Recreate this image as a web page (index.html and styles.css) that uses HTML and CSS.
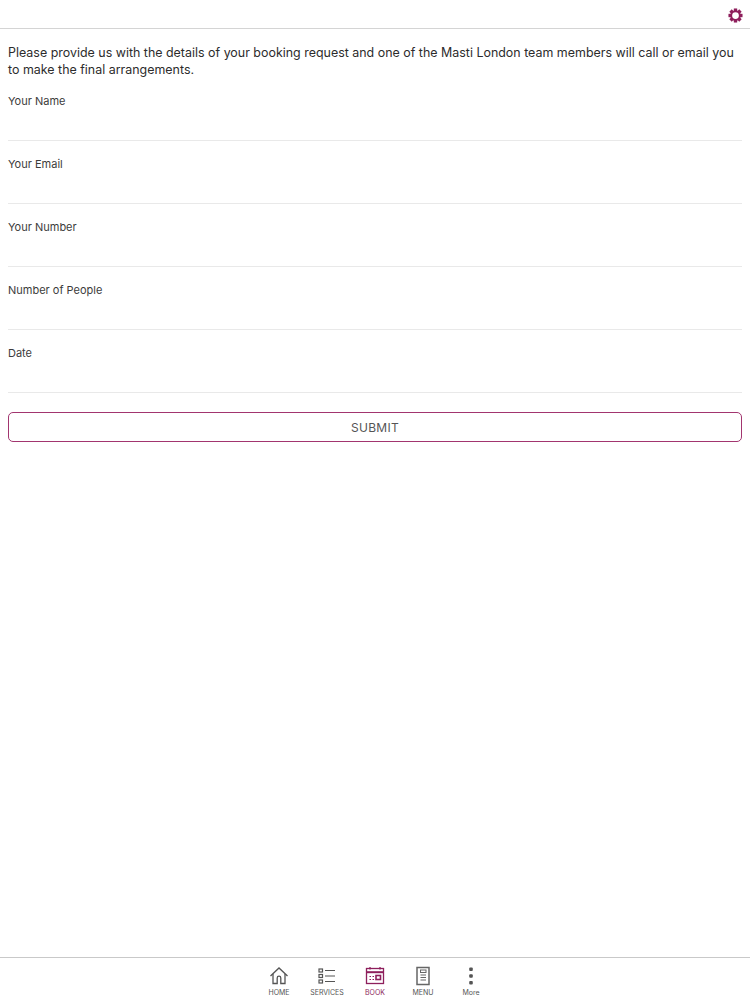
FILE: index.html
```html
<!DOCTYPE html>
<html lang="en">
<head>
    <meta charset="UTF-8">
    <meta name="viewport" content="width=device-width, initial-scale=1.0">
    <title>Book</title>
    <link rel="stylesheet" href="styles.css">
</head>
<body>
    <div class="page">
        <div class="topbar">
            <svg class="gear" width="15" height="15" viewBox="0 0 16 16">
                <circle cx="8" cy="8" r="4.6" fill="none" stroke="#8e1f5c" stroke-width="2"/>
                <g fill="#8e1f5c">
                    <rect x="6.2" y="0.5" width="3.6" height="3"/>
                    <rect x="6.2" y="12.5" width="3.6" height="3"/>
                    <rect x="0.5" y="6.2" width="3" height="3.6"/>
                    <rect x="12.5" y="6.2" width="3" height="3.6"/>
                    <rect x="6.2" y="0.5" width="3.6" height="3" transform="rotate(45 8 8)"/>
                    <rect x="6.2" y="12.5" width="3.6" height="3" transform="rotate(45 8 8)"/>
                    <rect x="0.5" y="6.2" width="3" height="3.6" transform="rotate(45 8 8)"/>
                    <rect x="12.5" y="6.2" width="3" height="3.6" transform="rotate(45 8 8)"/>
                </g>
            </svg>
        </div>

        <div class="content">
            <p class="intro">Please provide us with the details of your booking request and one of the Masti London team members will call or email you to make the final arrangements.</p>
            <form class="booking-form">
                <div class="field"><label>Your Name</label></div>
                <div class="field"><label>Your Email</label></div>
                <div class="field"><label>Your Number</label></div>
                <div class="field"><label>Number of People</label></div>
                <div class="field"><label>Date</label></div>
                <button type="button" class="submit">SUBMIT</button>
            </form>
        </div>

        <div class="tabbar">
            <a class="tab" href="#">
                <svg width="20" height="20" viewBox="0 0 20 20" fill="none" stroke="#555" stroke-width="1.3">
                    <path d="M1.5 10 10 2l8.5 8"/>
                    <path d="M4 8v9.5h4.2v-5.500a1.800 1.800 0 0 1 3.600 0v5.500H16V8"/>
                </svg>
                <span>HOME</span>
            </a>
            <a class="tab" href="#">
                <svg width="20" height="20" viewBox="0 0 20 20" fill="none" stroke="#555" stroke-width="1.2">
                    <rect x="2" y="3" width="3.5" height="3"/>
                    <rect x="2" y="8.5" width="3.5" height="3"/>
                    <rect x="2" y="14" width="3.5" height="3"/>
                    <path d="M8 4.500h10M8 10h10M8 15.500h10"/>
                </svg>
                <span>SERVICES</span>
            </a>
            <a class="tab active" href="#">
                <svg width="20" height="20" viewBox="0 0 20 20" fill="none" stroke="#8e1f5c" stroke-width="1.3">
                    <rect x="1.5" y="2.5" width="17" height="15"/>
                    <path d="M1.5 6.2h17" stroke-width="2"/>
                    <path d="M5 1v2.500M15 1v2.500"/>
                    <path d="M4.500 10.500h1.500M7.500 10.500h1.500M4.500 13.500h1.500M7.500 13.500h1.500" stroke-width="1.2"/>
                    <rect x="11" y="9.5" width="4.5" height="4" stroke-width="1.6"/>
                </svg>
                <span>BOOK</span>
            </a>
            <a class="tab" href="#">
                <svg width="20" height="20" viewBox="0 0 20 20" fill="none" stroke="#666" stroke-width="1.5">
                    <rect x="4" y="1.5" width="12" height="17"/>
                    <rect x="7.500" y="4" width="5.500" height="2.500" stroke-width="1"/>
                    <path d="M7.500 9h5.500M7.500 11.500h5.500M7.500 14h5.500" stroke-width="1.2"/>
                </svg>
                <span>MENU</span>
            </a>
            <a class="tab" href="#">
                <svg width="20" height="20" viewBox="0 0 20 20" fill="#555">
                    <rect x="8.2" y="1.5" width="3.6" height="3.6" rx="1"/>
                    <rect x="8.2" y="8.2" width="3.6" height="3.6" rx="1"/>
                    <rect x="8.2" y="14.9" width="3.6" height="3.6" rx="1"/>
                </svg>
                <span>More</span>
            </a>
        </div>
    </div>
</body>
</html>
```

FILE: styles.css
```css
body {
    font-family: Inter, "Open Sans", sans-serif;
    margin: 0;
    padding: 0;
    background-color: #fff;
    color: #333;
}

.page {
    height: 1000px;
    display: flex;
    flex-direction: column;
    overflow: hidden;
}

.topbar {
    height: 28px;
    border-bottom: 1px solid #d4d4d4;
    display: flex;
    justify-content: flex-end;
    align-items: center;
    padding-right: 7px;
    flex-shrink: 0;
}

.gear {
    margin-top: 3px;
}

.content {
    flex: 1;
    padding: 15px 8px 0;
}

.intro {
    margin: 0;
    font-size: 12.45px;
    line-height: 17px;
    color: #2c2c2c;
}

.field {
    box-sizing: border-box;
    height: 63px;
    border-bottom: 1px solid #e9e9e9;
}

.field label {
    display: block;
    padding-top: 16px;
    font-size: 11px;
    line-height: 14px;
    color: #3c3c3c;
}

.submit {
    display: block;
    width: 100%;
    height: 30px;
    margin-top: 19px;
    background-color: #fff;
    border: 1px solid #a2356f;
    border-radius: 5px;
    font-family: inherit;
    font-size: 12px;
    letter-spacing: 0.3px;
    color: #555;
}

.tabbar {
    height: 42px;
    border-top: 1px solid #c9c9c9;
    display: flex;
    justify-content: center;
    flex-shrink: 0;
}

.tab {
    width: 48px;
    padding-top: 8px;
    display: flex;
    flex-direction: column;
    align-items: center;
    text-decoration: none;
    color: #555;
    font-size: 7px;
    line-height: 9px;
}

.tab span {
    margin-top: 2px;
    white-space: nowrap;
}

.tab.active {
    color: #8e1f5c;
}
```
